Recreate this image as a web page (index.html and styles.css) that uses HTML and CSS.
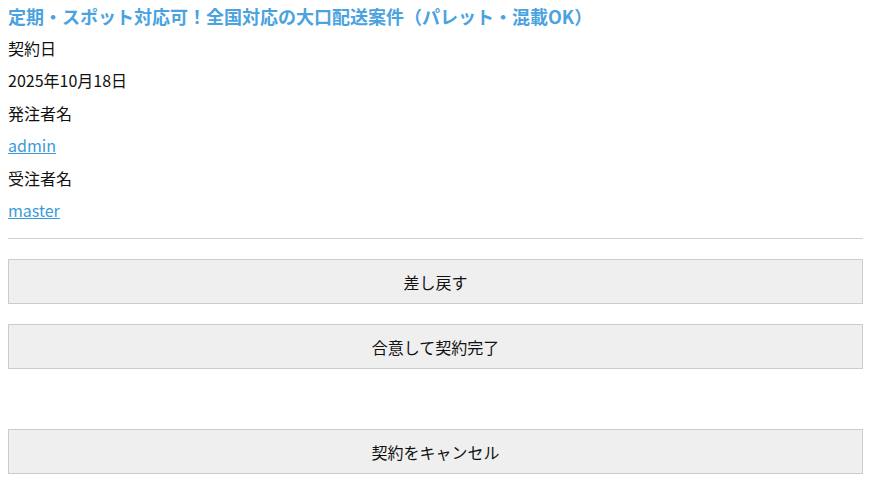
FILE: index.html
```html
<!DOCTYPE html>
<html lang="ja">
<head>
<meta charset="utf-8">
<link rel="stylesheet" href="styles.css">
</head>
<body>
<main class="page">
  <h2 class="title">定期・スポット対応可！全国対応の大口配送案件（パレット・混載OK）</h2>
  <p class="row">契約日</p>
  <p class="row">2025年10月18日</p>
  <p class="row">発注者名</p>
  <p class="row"><a class="link" href="#">admin</a></p>
  <p class="row">受注者名</p>
  <p class="row"><a class="link" href="#">master</a></p>
  <hr class="divider">
  <div class="actions">
    <button class="btn" type="button">差し戻す</button>
    <button class="btn" type="button">合意して契約完了</button>
  </div>
  <div class="actions cancel">
    <button class="btn" type="button">契約をキャンセル</button>
  </div>
</main>
</body>
</html>
```

FILE: styles.css
```css
html, body {
  margin: 0;
  padding: 0;
  background: #fff;
}
body {
  font-family: "Noto Sans CJK JP", "Noto Sans", sans-serif;
  font-size: 16px;
  color: #111;
}
.page {
  padding: 4px 8px 0 8px;
}
.title {
  margin: 0;
  font-size: 18px;
  font-weight: 700;
  line-height: 24px;
  color: #4aa3df;
}
.row {
  margin: 8px 0 0 0;
  line-height: 24.4px;
}
.link {
  color: #3a9ad9;
  text-decoration: underline;
}
.divider {
  margin: 15.6px 0 0 0;
  border: 0;
  border-top: 1px solid #cfcfcf;
  height: 0;
}
.actions {
  display: flex;
  flex-direction: column;
  gap: 20px;
  margin-top: 20px;
}
.actions.cancel {
  margin-top: 60px;
}
.btn {
  display: block;
  width: 100%;
  height: 45px;
  margin: 0;
  padding: 0;
  background: #efefef;
  border: 1px solid #cccccc;
  border-radius: 0;
  font-family: "Noto Sans CJK JP", "Noto Sans", sans-serif;
  font-size: 16px;
  color: #111;
  cursor: pointer;
}
```
